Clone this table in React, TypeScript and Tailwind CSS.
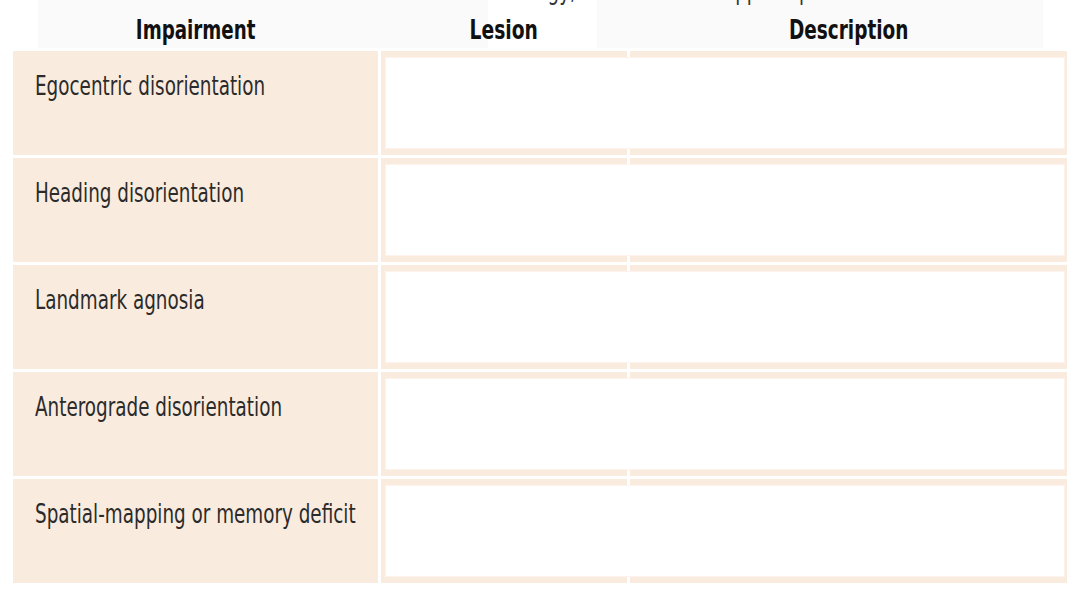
import React from "react";

const rows = [
  "Egocentric disorientation",
  "Heading disorientation",
  "Landmark agnosia",
  "Anterograde disorientation",
  "Spatial-mapping or memory deficit",
];

const FONT = "font-['Liberation_Sans_Narrow','DejaVu_Sans_Condensed','Roboto_Condensed',sans-serif]";

export default function App() {
  return (
    <div className={`relative w-[1080px] h-[600px] overflow-hidden bg-white ${FONT}`}>
      {/* header band */}
      <div className="relative h-[51px] pl-[13px] flex">
        <div className="absolute left-[38px] top-0 h-[48px] w-[450px] bg-[#fafafa]" />
        <div className="absolute left-[597px] top-0 h-[48px] w-[446px] bg-[#fafafa]" />
        {/* clipped line of running text above */}
        <div className="absolute top-[-23px] left-0 w-full h-[28px] text-[26px] leading-[26px] text-[#333] whitespace-nowrap">
          <span className="absolute left-[520px] inline-block origin-left scale-x-[0.785]">ology, as</span>
          <span className="absolute left-[706px] inline-block origin-left scale-x-[0.785]">mapped upon</span>
        </div>
        <div className="relative grid grid-cols-[365px_3px_246px_3px_437px] w-full pt-[17px] text-[26px] leading-[26px] font-bold text-[#111]">
          <div className="text-center">
            <span className="inline-block scale-x-[0.78]">Impairment</span>
          </div>
          <div />
          <div className="text-center">
            <span className="inline-block scale-x-[0.8]">Lesion</span>
          </div>
          <div />
          <div className="text-center">
            <span className="inline-block scale-x-[0.79]">Description</span>
          </div>
        </div>
      </div>

      {/* rows */}
      <div className="flex flex-col gap-[3px] pl-[13px]">
        {rows.map((r) => (
          <div key={r} className="flex gap-[3px] h-[104px]">
            <div className="w-[365px] bg-[#faebdf] pl-[22px] pt-[22px] text-[26px] leading-[26px] text-[#2b2b2b] whitespace-nowrap">
              <span className="inline-block origin-left scale-x-[0.785]">{r}</span>
            </div>
            <div className="relative w-[686px] flex gap-[3px]">
              <div className="w-[246px] bg-[#faebdf]" />
              <div className="flex-1 bg-[#faebdf]" />
              <div className="absolute left-[4px] right-[2px] top-[6px] bottom-[6px] bg-white border border-[#fdf3ec]" />
            </div>
          </div>
        ))}
      </div>
    </div>
  );
}
